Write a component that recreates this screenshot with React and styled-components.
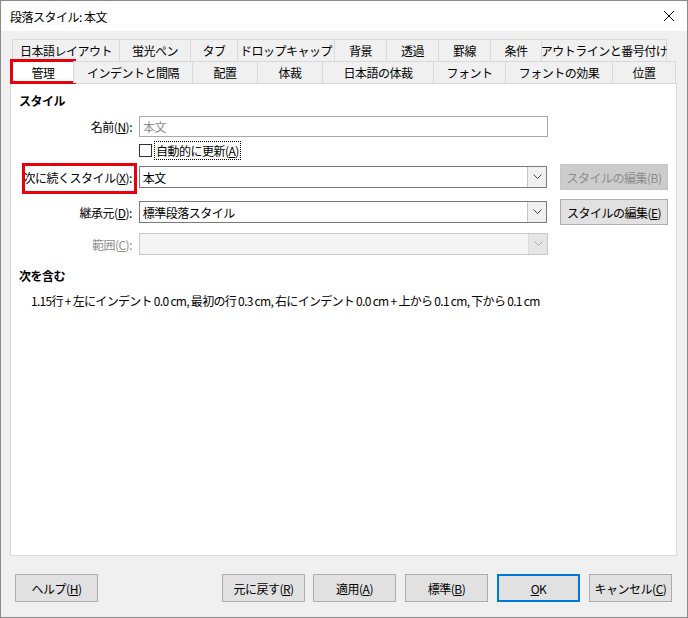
import React from 'react';
import styled, { createGlobalStyle } from 'styled-components';

const Global = createGlobalStyle`
  html, body { margin: 0; padding: 0; }
  body {
    font-family: "Noto Sans CJK JP", "Noto Sans", sans-serif;
    font-size: 12px;
    letter-spacing: -0.5px;
    color: #000;
    background: #fff;
  }
`;

const Window = styled.div`
  width: 688px;
  height: 618px;
  box-sizing: border-box;
  border: 1px solid #8a8a8a;
  background: #f0f0f0;
  display: flex;
  flex-direction: column;
  overflow: hidden;
`;

const TitleBar = styled.div`
  height: 30px;
  background: #fff;
  display: flex;
  align-items: center;
  justify-content: space-between;
  padding: 0 12px 0 9px;
`;

const Body = styled.div`
  padding: 8px 9px 0 9px;
  display: flex;
  flex-direction: column;
`;

const TabRow = styled.div`
  display: flex;
  height: 22px;
  padding-left: 2px;
  position: relative;
  z-index: 1;
`;

const Tab = styled.div`
  width: ${p => p.w}px;
  box-sizing: border-box;
  border: 1px solid #d9d9d9;
  border-bottom: none;
  margin-right: -1px;
  display: flex;
  align-items: center;
  justify-content: center;
  background: ${p => (p.active ? '#fff' : '#f0f0f0')};
  white-space: nowrap;
  position: relative;
  ${p => p.active && `
    &::after {
      content: '';
      position: absolute;
      left: -3px; right: -3px; top: -3px; bottom: -1px;
      border: 3px solid #e8000b;
    }
  `}
`;

const Panel = styled.div`
  height: 473px;
  margin-right: 1px;
  background: #fff;
  border: 1px solid #d9d9d9;
  padding: 8px 8px 0 8px;
  box-sizing: border-box;
`;

const Heading = styled.div`
  font-weight: bold;
  margin-bottom: 6px;
  margin-top: ${p => p.mt || 0}px;
`;

const FormRow = styled.div`
  display: flex;
  align-items: center;
  height: ${p => p.h || 22}px;
  margin-bottom: ${p => p.mb || 0}px;
`;

const Label = styled.div`
  width: 113px;
  text-align: right;
  padding-right: 7px;
  color: ${p => (p.disabled ? '#8d8d8d' : '#000')};
  white-space: nowrap;
  position: relative;
  ${p => p.boxed && `
    &::after {
      content: '';
      position: absolute;
      left: 3px; right: 2px; top: -6px; bottom: -8px;
      border: 3px solid #e8000b;
    }
  `}
`;

const Input = styled.div`
  width: 409px;
  height: 21px;
  box-sizing: border-box;
  border: 1px solid #a9a9a9;
  padding: 0 3px;
  display: flex;
  align-items: center;
  color: #8d8d8d;
`;

const Combo = styled.div`
  width: 409px;
  height: 22px;
  box-sizing: border-box;
  border: 1px solid ${p => (p.disabled ? '#c8c8c8' : '#7a7a7a')};
  display: flex;
  align-items: center;
  background: ${p => (p.disabled ? '#f5f5f5' : '#fff')};
`;

const ComboText = styled.div`
  flex: 1;
  padding-left: 3px;
`;

const Arrow = styled.div`
  width: 18px;
  height: 20px;
  border-left: 1px solid ${p => (p.disabled ? '#dadada' : '#c4c4c4')};
  background: ${p => (p.disabled ? '#e6e6e6' : '#f0f0f0')};
  display: flex;
  align-items: center;
  justify-content: center;
`;

const SideButton = styled.div`
  margin-left: 13px;
  width: 108px;
  height: 26px;
  box-sizing: border-box;
  border: 1px solid ${p => (p.disabled ? '#c6c6c6' : '#adadad')};
  background: ${p => (p.disabled ? '#cccccc' : '#e1e1e1')};
  color: ${p => (p.disabled ? '#8d8d8d' : '#000')};
  display: flex;
  align-items: center;
  justify-content: center;
`;

const CheckRow = styled.div`
  display: flex;
  align-items: center;
  margin: 5px 0 5px 120px;
  gap: 3px;
`;

const Box = styled.div`
  width: 11px;
  height: 11px;
  border: 1px solid #333;
`;

const Focus = styled.span`
  outline: 1px dotted #000;
  padding: 0 1px;
`;

const Summary = styled.div`
  padding-left: 12px;
  margin-top: 8px;
  letter-spacing: -0.7px;
`;

const Footer = styled.div`
  display: flex;
  align-items: center;
  padding: 18px 14px 0 14px;
`;

const Button = styled.div`
  width: 83px;
  height: 28px;
  box-sizing: border-box;
  border: ${p => (p.primary ? '2px solid #0078d7' : '1px solid #adadad')};
  background: #e1e1e1;
  display: flex;
  align-items: center;
  justify-content: center;
  margin-left: ${p => p.ml || 0}px;
`;

const U = styled.span`text-decoration: underline;`;

const Chevron = ({ disabled }) => (
  <Arrow disabled={disabled}>
    <svg width="9" height="6" viewBox="0 0 9 6">
      <path d="M0.5 0.5 L4.5 4.5 L8.5 0.5" fill="none" stroke={disabled ? '#a8a8a8' : '#444'} strokeWidth="1" />
    </svg>
  </Arrow>
);

const row1 = [
  ['日本語レイアウト', 108], ['蛍光ペン', 72], ['タブ', 48], ['ドロップキャップ', 98],
  ['背景', 53], ['透過', 53], ['罫線', 53], ['条件', 52], ['アウトラインと番号付け', 126],
];
const row2 = [
  ['管理', 62], ['インデントと間隔', 120], ['配置', 66], ['体裁', 66],
  ['日本語の体裁', 112], ['フォント', 73], ['フォントの効果', 108], ['位置', 64],
];

export default function App() {
  return (
    <>
      <Global />
      <Window>
        <TitleBar>
          <span>段落スタイル: 本文</span>
          <svg width="12" height="12" viewBox="0 0 12 12">
            <path d="M1 1 L11 11 M11 1 L1 11" stroke="#000" strokeWidth="1" />
          </svg>
        </TitleBar>
        <Body>
          <TabRow>
            {row1.map(([t, w]) => <Tab key={t} w={w}>{t}</Tab>)}
          </TabRow>
          <TabRow>
            {row2.map(([t, w], i) => <Tab key={t} w={w} active={i === 0}>{t}</Tab>)}
          </TabRow>
          <Panel>
            <Heading>スタイル</Heading>
            <FormRow>
              <Label>名前(<U>N</U>):</Label>
              <Input>本文</Input>
            </FormRow>
            <CheckRow>
              <Box />
              <Focus>自動的に更新(<U>A</U>)</Focus>
            </CheckRow>
            <FormRow h={26} mb={9}>
              <Label boxed>次に続くスタイル(<U>X</U>):</Label>
              <Combo>
                <ComboText>本文</ComboText>
                <Chevron />
              </Combo>
              <SideButton disabled>スタイルの編集(B)</SideButton>
            </FormRow>
            <FormRow h={26} mb={8}>
              <Label>継承元(<U>D</U>):</Label>
              <Combo>
                <ComboText>標準段落スタイル</ComboText>
                <Chevron />
              </Combo>
              <SideButton>スタイルの編集(<U>E</U>)</SideButton>
            </FormRow>
            <FormRow>
              <Label disabled>範囲(<U>C</U>):</Label>
              <Combo disabled>
                <ComboText />
                <Chevron disabled />
              </Combo>
            </FormRow>
            <Heading mt={12}>次を含む</Heading>
            <Summary>1.15行 + 左にインデント 0.0 cm, 最初の行 0.3 cm, 右にインデント 0.0 cm + 上から 0.1 cm, 下から 0.1 cm</Summary>
          </Panel>
        </Body>
        <Footer>
          <Button>ヘルプ(<U>H</U>)</Button>
          <Button ml={124}>元に戻す(<U>R</U>)</Button>
          <Button ml={8}>適用(<U>A</U>)</Button>
          <Button ml={9}>標準(<U>B</U>)</Button>
          <Button ml={9} primary><U>O</U>K</Button>
          <Button ml={9}>キャンセル(<U>C</U>)</Button>
        </Footer>
      </Window>
    </>
  );
}
